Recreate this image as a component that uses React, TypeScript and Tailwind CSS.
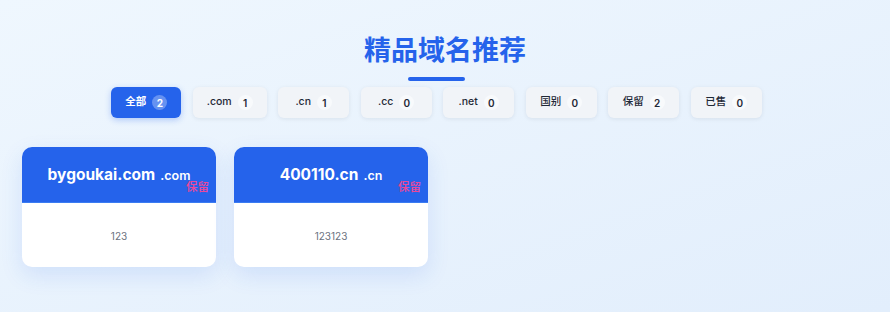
import React from 'react'

interface Tab {
  label: string
  count: number
}

interface Domain {
  name: string
  ext: string
  tag: string
  desc: string
}

const tabs: Tab[] = [
  { label: '全部', count: 2 },
  { label: '.com', count: 1 },
  { label: '.cn', count: 1 },
  { label: '.cc', count: 0 },
  { label: '.net', count: 0 },
  { label: '国别', count: 0 },
  { label: '保留', count: 2 },
  { label: '已售', count: 0 }
]

const domains: Domain[] = [
  { name: 'bygoukai.com', ext: '.com', tag: '保留', desc: '123' },
  { name: '400110.cn', ext: '.cn', tag: '保留', desc: '123123' }
]

function FilterTab({ tab, active }: { tab: Tab; active: boolean }) {
  return (
    <button
      className={
        active
          ? 'h-[31px] min-w-[70px] px-[14px] flex items-center justify-center gap-[6px] rounded-[6px] bg-[#2563eb] text-white font-bold shadow-[0_2px_6px_rgba(37,99,235,0.3)]'
          : 'h-[31px] min-w-[71px] px-[14px] flex items-center justify-center gap-[6px] rounded-[6px] bg-[#f1f4f8] text-[#1f2937] font-medium shadow-[0_1px_4px_rgba(15,23,42,0.08)]'
      }
    >
      <span className="text-[10.5px] leading-none">{tab.label}</span>
      <span
        className={
          active
            ? 'w-[15px] h-[15px] rounded-full bg-white/30 flex items-center justify-center text-[10px] font-bold leading-none'
            : 'w-[15px] h-[15px] rounded-full bg-[#f8fafc] flex items-center justify-center text-[10px] font-semibold leading-none'
        }
      >
        {tab.count}
      </span>
    </button>
  )
}

function DomainCard({ domain }: { domain: Domain }) {
  return (
    <div className="w-[194px] rounded-[10px] overflow-hidden bg-white shadow-[0_8px_22px_rgba(37,99,235,0.13)]">
      <div className="relative h-[56px] bg-[#2563eb] border-b border-[#3b7cf2] flex items-center justify-center">
        <div className="flex items-baseline text-white">
          <span className="text-[15.5px] font-bold leading-none">{domain.name}</span>
          <span className="ml-[5px] text-[12.5px] font-semibold leading-none text-white">{domain.ext}</span>
        </div>
        <span className="absolute right-[7px] bottom-[10px] text-[11.5px] font-medium leading-none text-[#ec4899] font-['Noto_Sans_CJK_SC',sans-serif]">
          {domain.tag}
        </span>
      </div>
      <div className="h-[64px] flex items-center justify-center pt-[3px] text-[10px] text-[#6b7280]">
        {domain.desc}
      </div>
    </div>
  )
}

export default function App() {
  return (
    <div className="w-full h-[312px] overflow-hidden bg-gradient-to-br from-[#eff7fe] to-[#e2eefc] font-['Inter','Noto_Sans_CJK_SC',sans-serif]">
      <h2 className="pt-[35px] text-center text-[27px] leading-[27px] font-bold text-[#2563eb] font-['Noto_Sans_CJK_SC',sans-serif]">
        精品域名推荐
      </h2>
      <div className="pr-[17px] flex flex-col items-center">
        <div className="mt-[15px] w-[57px] h-[4px] rounded-full bg-[#2563eb]" />
        <div className="mt-[6px] flex gap-[11.5px]">
          {tabs.map((tab, i) => (
            <FilterTab key={tab.label} tab={tab} active={i === 0} />
          ))}
        </div>
      </div>
      <div className="mt-[29px] px-[22px] flex gap-[18px]">
        {domains.map((d) => (
          <DomainCard key={d.name} domain={d} />
        ))}
      </div>
    </div>
  )
}
